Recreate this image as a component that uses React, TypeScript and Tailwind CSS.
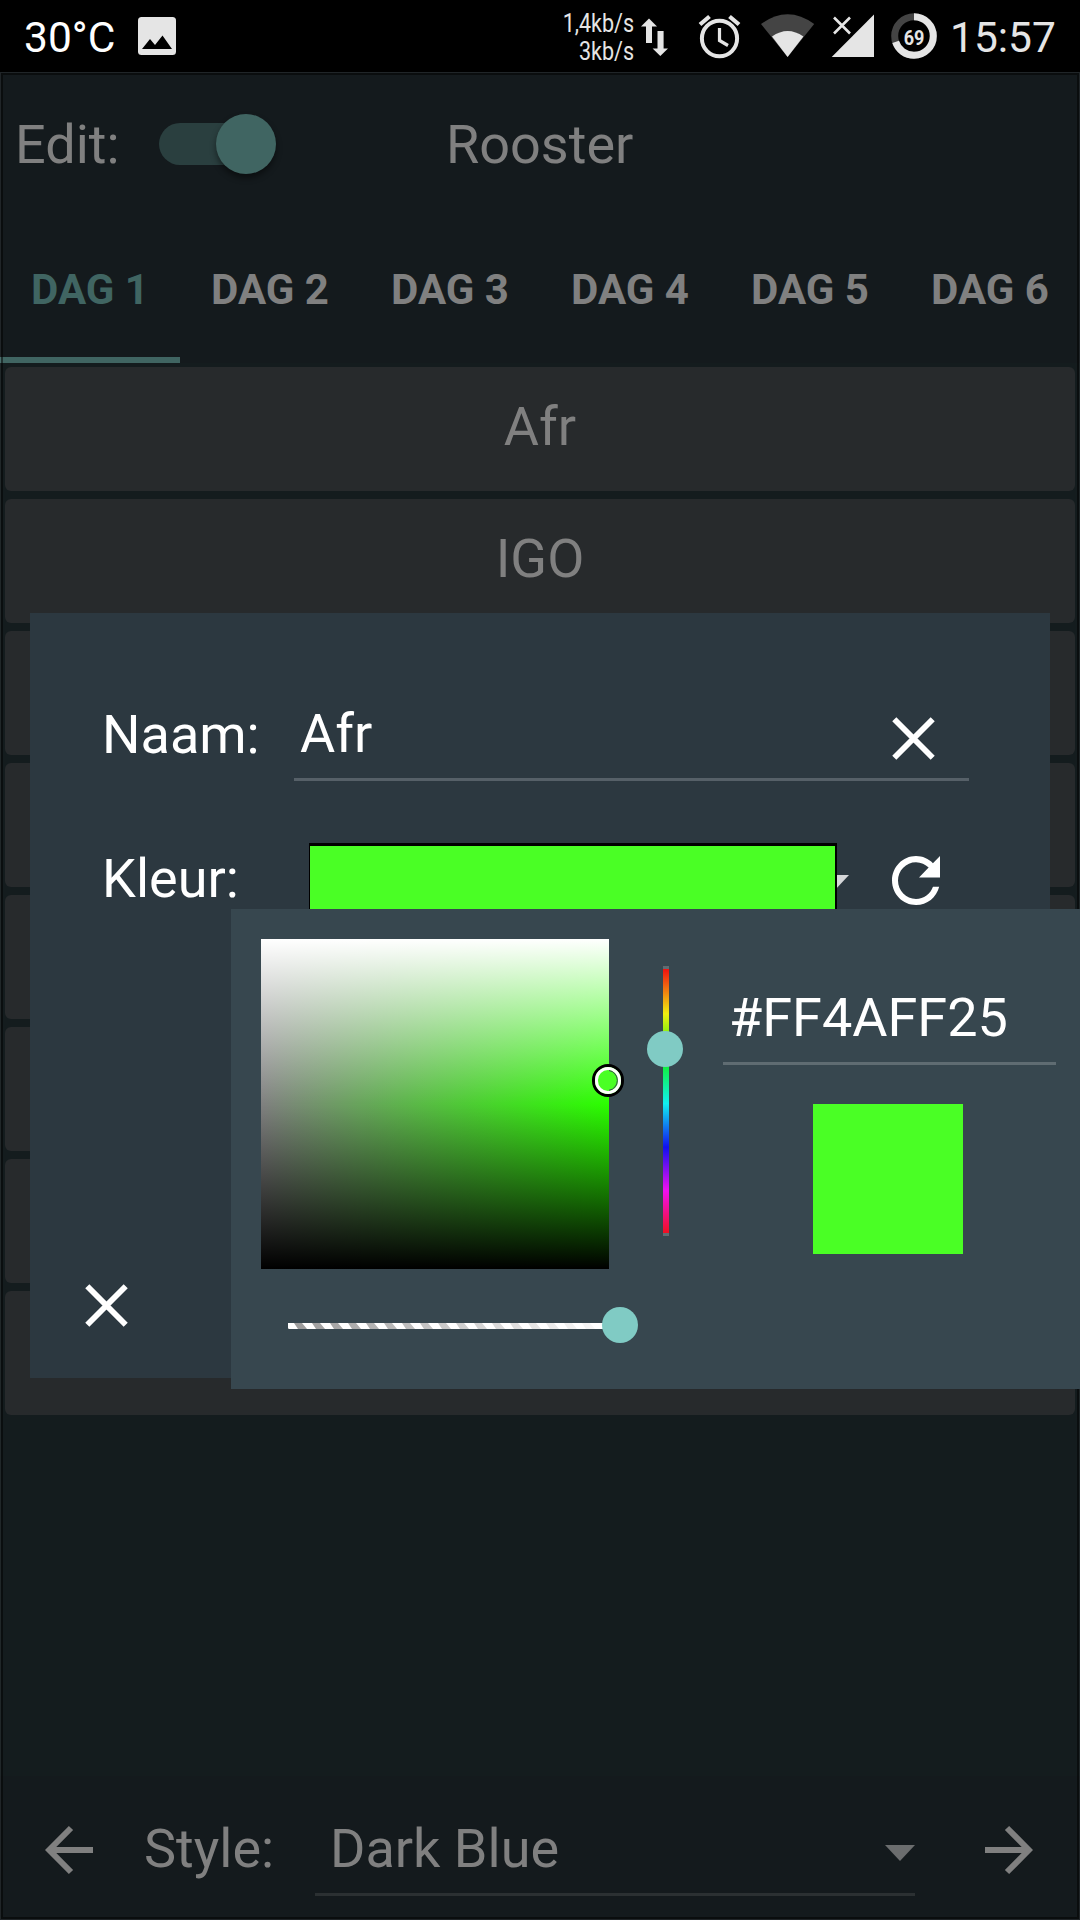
import React from "react";

const tabs = ["DAG 1", "DAG 2", "DAG 3", "DAG 4", "DAG 5", "DAG 6"];
const lessons = ["Afr", "IGO", "", "", "", "", "", ""];

function StatusBar() {
  return (
    <header className="flex h-[72px] shrink-0 items-center bg-black pl-6 text-[42.5px] leading-[60px] text-[#e5e5e5]">
      <span className="mt-[3px] w-[114px] whitespace-nowrap text-white">30°C</span>
      <svg className="h-[38px] w-[38px]" viewBox="0 0 38 38">
        <rect width="38" height="38" rx="3.5" fill="#e5e5e5" />
        <path d="M4 32 L12 22 L17 28 L24.500 18.500 L34 32 Z" fill="#000" />
      </svg>
      <div className="mt-[3px] ml-auto mr-[6px] flex w-[80px] origin-right scale-x-[0.86] flex-col items-end text-[25px] leading-[28px]">
        <span>1,4kb/s</span>
        <span>3kb/s</span>
      </div>
      <svg className="h-[72px] w-[240px]" viewBox="640 0 240 72">
        <g fill="#e5e5e5">
          <path d="M649 18.500 L657 26.500 H652 V43 H646 V26.500 H641 Z" />
          <path d="M657.500 31 H663.600 V48.500 H668 L660.300 56 L652.600 48.500 H657.500 Z" />
        </g>
        <g fill="none" stroke="#e5e5e5">
          <ellipse cx="719.500" cy="38.500" rx="17.600" ry="17.800" strokeWidth="4" />
          <path d="M719.500 28 V40.500 L728 45.500" strokeWidth="3.200" />
          <path d="M700 24.500 L709.500 16.500 M729.500 16.500 L739 24.500" strokeWidth="4.200" />
        </g>
        <path d="M761 24 Q787.600 4.500 814.200 24 L787.600 57 Z" fill="#444" />
        <path d="M772 36.500 Q787.600 25.500 803.400 36.500 L787.600 57 Z" fill="#e5e5e5" />
        <path d="M831.700 57 H874 V14.500 Z" fill="#e5e5e5" />
        <path d="M834 17.500 L850 33.500 M850 17.500 L834 33.500" stroke="#e5e5e5" strokeWidth="2.600" />
      </svg>
      <div className="relative ml-[11px] mr-[13px] h-[46px] w-[46px]">
        <svg className="h-full w-full" viewBox="0 0 46 46">
          <circle cx="23" cy="23" r="19.300" fill="none" stroke="#444" strokeWidth="7" />
          <circle cx="23" cy="23" r="19.300" fill="none" stroke="#e5e5e5" strokeWidth="7" pathLength="100" strokeDasharray="70 30" transform="rotate(-90 23 23)" />
        </svg>
        <span className="absolute inset-0 mt-[4px] scale-x-[0.86] text-center text-[21px] leading-[43px] font-bold">69</span>
      </div>
      <span className="mt-[3px] mr-[25px] w-[105px] whitespace-nowrap">15:57</span>
    </header>
  );
}

function Cross() {
  return (
    <svg className="h-[43px] w-[43px]" viewBox="0 0 43 43">
      <path d="M2.300 2.300 L40.700 40.700 M40.700 2.300 L2.300 40.700" stroke="#fff" strokeWidth="5.800" />
    </svg>
  );
}

function Arrow({ flip = false }: { flip?: boolean }) {
  return (
    <svg className={flip ? "mt-1 h-[50px] w-[48px] -scale-x-100" : "mt-1 h-[50px] w-[48px]"} viewBox="0 0 48 50">
      <path d="M26 3 L4.200 25 L26 47 M4 25 H48" fill="none" stroke="#808080" strokeWidth="6" />
    </svg>
  );
}

function ColorPicker() {
  return (
    <div className="absolute left-[231px] top-[909px] z-20 grid h-[480px] w-[849px] grid-cols-[348px_114px_1fr] bg-[#37474f] pl-[30px] pt-[30px]">
      <div>
        <div className="relative h-[330px] w-[348px] bg-[linear-gradient(to_bottom,#fff,rgba(255,255,255,0)_50%,rgba(0,0,0,0)_50%,#000),linear-gradient(to_right,#808080,#2bff00)]">
          <div className="absolute left-[331px] top-[125px] h-[33px] w-8 rounded-full border-3 border-black bg-[#4aff25]">
            <div className="h-full w-full rounded-full border-3 border-white" />
            <svg className="absolute inset-0 h-full w-full" viewBox="0 0 26 27">
              <path d="M14 3.500 A9.700 10 0 0 1 14 23.300" fill="none" stroke="#37474f" strokeWidth="1" />
            </svg>
          </div>
        </div>
        <div className="relative ml-[27px] mt-[54px] h-1.5 w-[332px] bg-white">
          <svg className="h-1.5 w-[332px]" viewBox="0 0 332 6">
            <defs>
              <pattern id="stripes" width="18" height="6" patternUnits="userSpaceOnUse">
                <path d="M6 0 H14 L19 6 H10 Z M-12 0 H-4 L1 6 H-8 Z" fill="#999" />
              </pattern>
              <linearGradient id="opacity">
                <stop offset="0" stopColor="#fff" stopOpacity="0" />
                <stop offset="1" stopColor="#fff" />
              </linearGradient>
            </defs>
            <rect width="332" height="6" fill="url(#stripes)" />
            <rect width="332" height="6" fill="url(#opacity)" />
          </svg>
          <div className="absolute -top-4 left-[314px] h-9 w-9 rounded-full bg-[#80cbc4]" />
        </div>
      </div>
      <div className="relative ml-[54px] mt-[27px] h-[270px] w-1.5 border-y-3 border-[#5f6c72] bg-[linear-gradient(to_bottom,#f01010,#f0f010_17%,#10f010_33%,#10f0f0_51%,#1010f0_67.500%,#f010f0_84%,#f01020)]">
        <div className="absolute -left-4 top-[62px] h-9 w-9 rounded-full bg-[#80cbc4]" />
      </div>
      <div className="flex w-[333px] flex-col pt-[40px]">
        <div className="h-[86px] border-b-3 border-[#5f6c72] pl-[6px] text-[54px] leading-[78px]">#FF4AFF25</div>
        <div className="ml-[90px] mt-[39px] h-[150px] w-[150px] bg-[#4aff25]" />
      </div>
    </div>
  );
}

function EditDialog() {
  return (
    <section className="absolute left-[30px] top-[613px] flex h-[765px] w-[1020px] flex-col bg-[#2c3840] pl-[72px] text-[54px] leading-[72px] text-white">
      <div className="mt-[86px] flex h-[82px]">
        <span className="w-[192px]">Naam:</span>
        <div className="flex w-[675px] border-b-3 border-[#566068] pl-[6px] leading-[70px]">
          <span className="w-[592px]">Afr</span>
          <div className="mt-[18px]"><Cross /></div>
        </div>
      </div>
      <div className="mt-[62px] flex h-[72px]">
        <span className="w-[207px]">Kleur:</span>
        <div className="z-10 h-[72px] w-[528px] border-y-3 border-l border-r-2 border-black bg-[#4aff25]" />
        <svg className="-ml-[18px] mt-[32px] h-[16px] w-[30px]" viewBox="0 0 30 16">
          <path d="M0 0 H30 L15 16 Z" fill="#d5d7d9" />
        </svg>
        <svg className="ml-[43px] mt-[13px] h-[49px] w-[48px]" viewBox="4 4 16 16" preserveAspectRatio="none">
          <path fill="#fff" d="M17.650 6.350C16.200 4.900 14.210 4 12 4c-4.420 0-7.990 3.580-7.990 8s3.570 8 7.990 8c3.730 0 6.840-2.550 7.730-6h-2.080c-.82 2.330-3.040 4-5.650 4-3.310 0-6-2.690-6-6s2.690-6 6-6c1.660 0 3.140.69 4.220 1.780L13 11h7V4l-2.350 2.350z" />
        </svg>
      </div>
      <div className="mb-[51px] -ml-[17px] mt-auto"><Cross /></div>
    </section>
  );
}

export default function App() {
  return (
    <div className="relative flex h-[1920px] w-[1080px] flex-col overflow-hidden bg-[#141c1e] font-[Roboto,sans-serif] text-white">
      <StatusBar />
      <div className="flex h-36 items-center bg-[#141a1d] pl-[15px] text-[54px] text-[#808080]">
        <span className="w-[144px]">Edit:</span>
        <div className="relative h-[42px] w-[105px] rounded-full bg-[#2a3f3f]">
          <div className="absolute -top-[9px] left-[57px] h-[60px] w-[60px] rounded-full bg-[#406562] shadow-[0_4px_6px_rgba(0,0,0,0.45)]" />
        </div>
        <span className="ml-[182px]">Rooster</span>
      </div>
      <nav className="grid h-[147px] grid-cols-6 bg-[#141a1d] text-[42px] font-bold text-[#808080]">
        {tabs.map((tab, i) => (
          <div
            key={tab}
            className={
              i === 0
                ? "flex items-center justify-center border-b-6 border-[#406562] pt-1.5 text-[#406562]"
                : "flex items-center justify-center"
            }
          >
            {tab}
          </div>
        ))}
      </nav>
      <main className="flex flex-1 flex-col gap-2 px-[5px] pt-1">
        {lessons.map((lesson, i) => (
          <div
            key={i}
            className="flex h-[124px] items-center justify-center rounded-md bg-[#272a2c] pb-1.5 text-[54px] text-[#808080]"
          >
            {lesson}
          </div>
        ))}
      </main>
      <footer className="flex h-36 items-center bg-[#141a1d] pl-[45px] text-[54px] leading-[72px] text-[#808080]">
        <Arrow />
        <span className="mt-0.5 ml-[51px] w-[171px]">Style:</span>
        <div className="flex h-[96px] w-[600px] border-b-3 border-[#2b3032] pl-[15px]">
          <span className="w-[555px] pt-[13px]">Dark Blue</span>
          <svg className="mt-[45px] h-[16px] w-[30px]" viewBox="0 0 30 16">
            <path d="M0 0 H30 L15 16 Z" fill="#6b6d6e" />
          </svg>
        </div>
        <div className="ml-[70px]"><Arrow flip /></div>
      </footer>
      <div className="pointer-events-none absolute inset-x-0 bottom-0 top-[72px] border border-white/5">
        <div className="h-full w-full border-2 border-black/50" />
      </div>
      <EditDialog />
      <ColorPicker />
    </div>
  );
}
